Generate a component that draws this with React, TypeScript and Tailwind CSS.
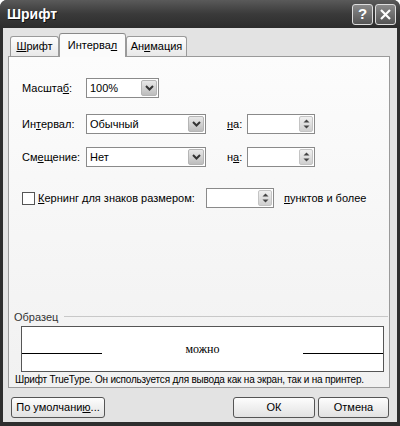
import React from "react";

const F = { fontFamily: '"Liberation Sans", Arial, sans-serif' };

function Chevron() {
  return (
    <svg width="9" height="6" viewBox="0 0 9 6">
      <path d="M1 1 L4.5 4.5 L8 1" stroke="#333" strokeWidth="2" fill="none" />
    </svg>
  );
}

function Select({ w, value }: { w: number; value: string }) {
  return (
    <div
      className="flex h-[20px] items-stretch border border-[#8a8a8a] bg-white"
      style={{ width: w }}
    >
      <div className="flex flex-1 items-center pl-[3px] text-[11px] text-black">{value}</div>
      <div className="m-px flex w-[16px] items-center justify-center rounded-[2px] border border-[#b5b5b5] bg-gradient-to-b from-[#e8e8e8] to-[#bdbdbd]">
        <Chevron />
      </div>
    </div>
  );
}

function Spin({ w }: { w: number }) {
  return (
    <div
      className="flex h-[20px] items-stretch border border-[#8a8a8a] bg-white"
      style={{ width: w }}
    >
      <div className="flex-1" />
      <div className="m-px flex w-[14px] flex-col items-center justify-center gap-[2px] rounded-[2px] border border-[#c4c4c4] bg-gradient-to-b from-[#f0f0f0] to-[#cfcfcf]">
        <svg width="7" height="4" viewBox="0 0 7 4">
          <path d="M0.5 3.5 L3.5 0.5 L6.5 3.5 Z" fill="#444" />
        </svg>
        <svg width="7" height="4" viewBox="0 0 7 4">
          <path d="M0.5 0.5 L3.5 3.5 L6.5 0.5 Z" fill="#444" />
        </svg>
      </div>
    </div>
  );
}

function Btn({ children, w }: { children: React.ReactNode; w: number }) {
  return (
    <div
      className="flex h-[21px] items-center justify-center rounded-[3px] border border-[#555] bg-gradient-to-b from-[#fdfdfd] to-[#e2e2e2] text-[11px] text-black"
      style={{ width: w }}
    >
      {children}
    </div>
  );
}

export default function App() {
  return (
    <div style={F} className="flex h-[426px] w-[400px] flex-col overflow-hidden rounded-t-[7px] bg-[#2e2e2e]">
      {/* Title bar */}
      <div className="flex h-[28px] items-center justify-between bg-gradient-to-b from-[#5a5a5a] via-[#3a3a3a] to-[#2c2c2c] pl-[7px] pr-[4px]">
        <span className="text-[14px] font-bold text-white" style={{ textShadow: "1px 1px 0 #111" }}>
          Шрифт
        </span>
        <div className="flex gap-[2px]">
          <div className="flex h-[21px] w-[21px] items-center justify-center rounded-[3px] border border-[#ddd] bg-gradient-to-b from-[#8a8a8a] to-[#555] text-[15px] font-bold text-white">
            ?
          </div>
          <div className="flex h-[21px] w-[21px] items-center justify-center rounded-[3px] border border-[#ddd] bg-gradient-to-b from-[#8a8a8a] to-[#555]">
            <svg width="13" height="13" viewBox="0 0 13 13">
              <path d="M2 2 L11 11 M11 2 L2 11" stroke="#fff" strokeWidth="2.2" />
            </svg>
          </div>
        </div>
      </div>

      {/* Body */}
      <div className="mx-[3px] mb-[4px] flex flex-1 flex-col bg-[#e3e3e3]">
        {/* Tabs */}
        <div className="flex h-[28px] items-end pl-[7px]">
          <div className="flex h-[20px] w-[49px] items-center justify-center rounded-t-[3px] border border-b-0 border-[#9a9a9a] bg-gradient-to-b from-[#fdfdfd] to-[#e8e8e8] text-[11px]">
            <span><u>Ш</u>рифт</span>
          </div>
          <div className="relative z-10 -mb-px flex h-[24px] w-[67px] items-center justify-center rounded-t-[3px] border border-b-0 border-[#9a9a9a] border-t-[#888] bg-[#fbfbfb] text-[11px]">
            <span>Интерва<u>л</u></span>
          </div>
          <div className="flex h-[20px] w-[61px] items-center justify-center rounded-t-[3px] border border-b-0 border-[#9a9a9a] bg-gradient-to-b from-[#fdfdfd] to-[#e8e8e8] text-[11px]">
            <span>Ан<u>и</u>мация</span>
          </div>
        </div>

        {/* Panel */}
        <div className="ml-[5px] flex h-[332px] w-[382px] flex-col border border-[#9a9a9a] bg-gradient-to-b from-[#fcfcfc] to-[#f1f1f1] text-[11px] text-black">
          <div className="mt-[21px] flex items-center pl-[13px]">
            <span className="w-[64px]">Масшта<u>б</u>:</span>
            <Select w={73} value="100%" />
          </div>
          <div className="mt-[16px] flex items-center pl-[13px]">
            <span className="w-[64px]">Ин<u>т</u>ервал:</span>
            <Select w={120} value="Обычный" />
            <span className="ml-[21px] w-[20px]"><u>н</u>а:</span>
            <Spin w={68} />
          </div>
          <div className="mt-[13px] flex items-center pl-[13px]">
            <span className="w-[64px]">См<u>е</u>щение:</span>
            <Select w={120} value="Нет" />
            <span className="ml-[21px] w-[20px]">н<u>а</u>:</span>
            <Spin w={68} />
          </div>
          <div className="mt-[21px] flex items-center pl-[13px]">
            <div className="h-[13px] w-[13px] border border-[#555] bg-white" />
            <span className="ml-[3px] w-[168px]"><u>К</u>ернинг для знаков размером:</span>
            <Spin w={68} />
            <span className="ml-[10px]"><u>п</u>унктов и более</span>
          </div>

          <div className="mt-auto flex items-center pl-[5px]">
            <span className="text-[#333]">Образец</span>
            <div className="ml-[6px] mr-[1px] h-px flex-1 bg-[#c8c8c8]" />
          </div>
          <div className="ml-[12px] mt-[1px] flex h-[46px] w-[363px] items-center border border-[#555] bg-white">
            <div className="mt-[8px] h-px w-[80px] bg-black" />
            <div className="flex flex-1 justify-center text-[12px] font-normal" style={{ fontFamily: '"Liberation Serif", "Times New Roman", serif' }}>
              можно
            </div>
            <div className="mt-[8px] h-px w-[80px] bg-black" />
          </div>
          <div className="mb-[1px] ml-[6px] mt-[1px] whitespace-nowrap text-[10px] leading-[13px] tracking-[-0.2px]">
            Шрифт TrueType. Он используется для вывода как на экран, так и на принтер.
          </div>
        </div>

        {/* Buttons */}
        <div className="mt-[9px] flex items-center pl-[8px] pr-[8px]">
          <Btn w={94}>
            <span>По умолчани<u>ю</u>...</span>
          </Btn>
          <div className="flex-1" />
          <Btn w={82}>ОК</Btn>
          <div className="w-[3px]" />
          <Btn w={71}>Отмена</Btn>
        </div>
      </div>
    </div>
  );
}
